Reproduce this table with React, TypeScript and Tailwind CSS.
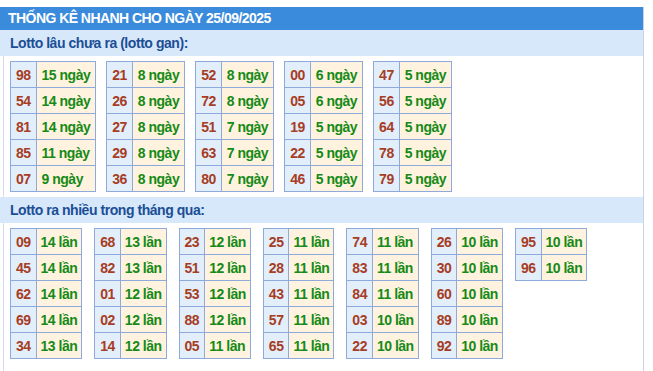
import React from 'react';

type Row = [string, number];

const GAN: Row[][] = [
  [['98', 15], ['54', 14], ['81', 14], ['85', 11], ['07', 9]],
  [['21', 8], ['26', 8], ['27', 8], ['29', 8], ['36', 8]],
  [['52', 8], ['72', 8], ['51', 7], ['63', 7], ['80', 7]],
  [['00', 6], ['05', 6], ['19', 5], ['22', 5], ['46', 5]],
  [['47', 5], ['56', 5], ['64', 5], ['78', 5], ['79', 5]],
];

const NHIEU: Row[][] = [
  [['09', 14], ['45', 14], ['62', 14], ['69', 14], ['34', 13]],
  [['68', 13], ['82', 13], ['01', 12], ['02', 12], ['14', 12]],
  [['23', 12], ['51', 12], ['53', 12], ['88', 12], ['05', 11]],
  [['25', 11], ['28', 11], ['43', 11], ['57', 11], ['65', 11]],
  [['74', 11], ['83', 11], ['84', 11], ['03', 10], ['22', 10]],
  [['26', 10], ['30', 10], ['60', 10], ['89', 10], ['92', 10]],
  [['95', 10], ['96', 10]],
];

const StatTable = ({ rows, unit, tight }: { rows: Row[]; unit: string; tight?: boolean }) => (
  <table className="border-collapse text-[14px] font-bold leading-none tracking-[-0.5px]">
    <tbody>
      {rows.map(([num, count]) => (
        <tr key={num}>
          <td className="h-[26px] border border-[#8eaadb] bg-[#e3eefb] px-[5px] py-0 text-center text-[#a63d24]">
            {num}
          </td>
          <td
            className={
              tight
                ? 'h-[26px] border border-[#8eaadb] bg-[#fff3e0] px-[4px] py-0 text-[#168a16] whitespace-nowrap'
                : 'h-[26px] border border-[#8eaadb] bg-[#fff3e0] px-[5px] py-0 text-[#168a16] whitespace-nowrap'
            }
          >
            {count} {unit}
          </td>
        </tr>
      ))}
    </tbody>
  </table>
);

const SectionTitle = ({ children }: { children: React.ReactNode }) => (
  <div className="h-[26px] bg-[#d6e8fa] pl-[10px] flex items-center text-[14px] font-bold tracking-[-0.45px] text-[#1c4e96]">
    {children}
  </div>
);

export default function App() {
  return (
    <div className="w-[644px] bg-white font-['Liberation_Sans',Arial,sans-serif]">
      <div className="h-[7px]" />
      <div className="w-full border-r border-[#c9d3e3]">
        {/* Header */}
        <div className="h-[23px] bg-[#3a8bdb] px-[8px] flex items-center text-[14px] font-bold tracking-[-0.55px] text-white">
          THỐNG KÊ NHANH CHO NGÀY 25/09/2025
        </div>

        {/* Lotto gan */}
        <SectionTitle>Lotto lâu chưa ra (lotto gan):</SectionTitle>
        <div className="ml-[3px] border-l border-[#d5dce8] pl-[6px] py-[5px] flex items-start gap-[10px]">
          {GAN.map((rows, i) => (
            <StatTable key={i} rows={rows} unit="ngày" />
          ))}
        </div>

        {/* Lotto ra nhieu */}
        <SectionTitle>Lotto ra nhiều trong tháng qua:</SectionTitle>
        <div className="ml-[3px] border-l border-[#d5dce8] pl-[6px] pt-[5px] pb-[14px] flex items-start gap-[12px]">
          {NHIEU.map((rows, i) => (
            <StatTable key={i} rows={rows} unit="lần" tight />
          ))}
        </div>
      </div>
    </div>
  );
}
